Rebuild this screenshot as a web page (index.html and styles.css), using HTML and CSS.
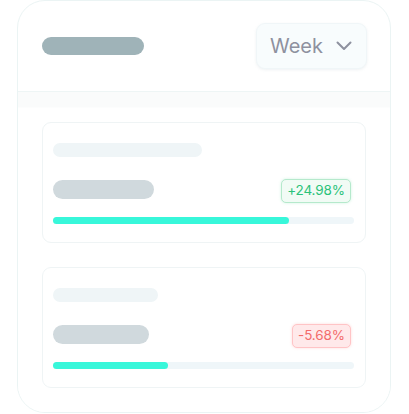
FILE: index.html
```html
<!DOCTYPE html>
<html>
<head>
<meta charset="utf-8">
<link rel="stylesheet" href="styles.css">
</head>
<body>
<div class="panel">
  <div class="panel-head">
    <div class="title-skel"></div>
    <button class="select">
      <span>Week</span>
      <svg width="16" height="10" viewBox="0 0 16 10"><path d="M1.5 1.5 L8 8 L14.5 1.5" fill="none" stroke="#8e919f" stroke-width="2" stroke-linecap="round" stroke-linejoin="round"/></svg>
    </button>
  </div>
  <div class="panel-body">
    <div class="card">
      <div class="skel-line" style="width:149px"></div>
      <div class="row">
        <div class="skel-pill" style="width:101px"></div>
        <span class="badge up">+24.98%</span>
      </div>
      <div class="track"><div class="fill" style="width:236px"></div></div>
    </div>
    <div class="card">
      <div class="skel-line" style="width:105px"></div>
      <div class="row">
        <div class="skel-pill" style="width:96px"></div>
        <span class="badge down">-5.68%</span>
      </div>
      <div class="track"><div class="fill" style="width:115px"></div></div>
    </div>
  </div>
</div>
</body>
</html>
```
FILE: styles.css
```css
* { box-sizing: border-box; }
body {
  margin: 0;
  background: #ffffff;
  font-family: Inter, "Noto Sans", sans-serif;
}
.panel {
  margin-left: 17px;
  width: 374px;
  height: 413px;
  border: 1px solid #ebf4f4;
  border-radius: 28px;
  overflow: hidden;
  background: #fff;
  display: flex;
  flex-direction: column;
}
.panel-head {
  height: 91px;
  flex: none;
  display: flex;
  align-items: center;
  justify-content: space-between;
  padding: 0 23px 0 24px;
  border-bottom: 1px solid #eef5f5;
}
.title-skel {
  width: 102px;
  height: 18px;
  border-radius: 9px;
  background: #9fb3b8;
}
.select {
  height: 46px;
  width: 111px;
  border: 1px solid #f0f6f8;
  border-radius: 9px;
  background: #f8fcfd;
  box-shadow: 0 1px 3px rgba(160, 180, 190, 0.18);
  display: flex;
  align-items: center;
  justify-content: space-between;
  padding: 0 14px 0 13px;
  font-family: Inter, "Noto Sans", sans-serif;
  font-size: 20px;
  color: #8e919f;
}
.panel-body {
  flex: 1;
  padding: 30px 24px 0 24px;
  display: flex;
  flex-direction: column;
  gap: 24px;
  background: linear-gradient(#fafbfb 0px, #fafbfb 15px, #ffffff 16px);
}
.card {
  height: 121px;
  border: 1px solid #eff4f5;
  border-radius: 9px;
  background: #fff;
  padding: 20px 11px 0 10px;
  display: flex;
  flex-direction: column;
}
.skel-line {
  height: 14px;
  border-radius: 7px;
  background: #eff5f7;
}
.row {
  margin-top: 22px;
  height: 24px;
  display: flex;
  align-items: center;
  justify-content: space-between;
}
.skel-pill {
  height: 19px;
  border-radius: 10px;
  background: #d0d9dd;
  margin-top: -3px;
}
.badge {
  height: 24px;
  margin-right: 3px;
  padding: 0 5px;
  border-radius: 5px;
  font-size: 13.5px;
  font-weight: 400;
  line-height: 21px;
  letter-spacing: -0.1px;
}
.badge.up {
  color: #2bc27a;
  background: #f1fbf5;
  border: 1.5px solid #b5e9cc;
  box-shadow: 0 0 3px rgba(120, 220, 170, 0.35);
}
.badge.down {
  color: #f36b6b;
  background: #ffe9ea;
  border: 1.5px solid #ffc4c6;
  box-shadow: 0 0 3px rgba(255, 150, 150, 0.35);
}
.track {
  margin-top: 14px;
  height: 7px;
  border-radius: 4px;
  background: #eff6f9;
}
.fill {
  height: 100%;
  border-radius: 4px;
  background: #38f7da;
}
```
